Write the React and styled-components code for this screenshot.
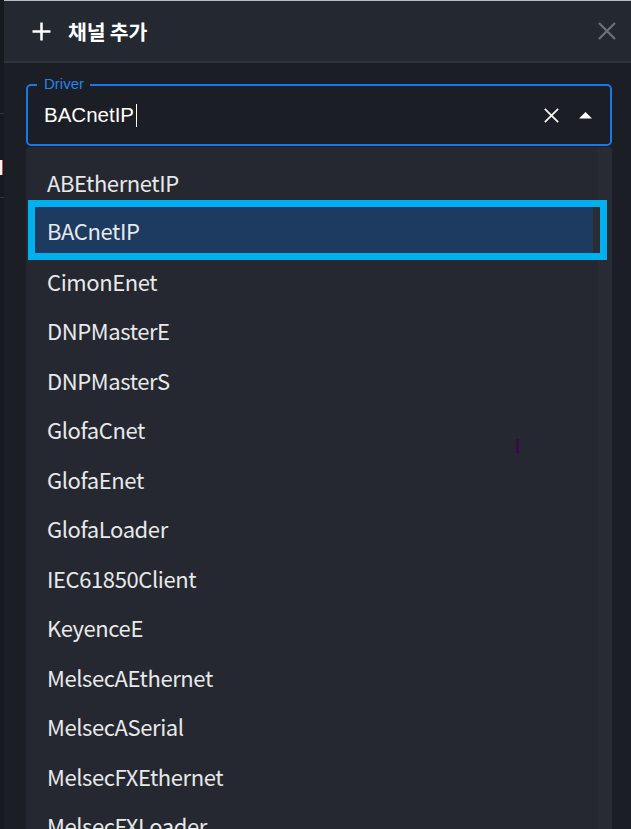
import React from 'react';
import styled, { createGlobalStyle } from 'styled-components';

const GlobalStyle = createGlobalStyle`
  html, body {
    margin: 0;
    padding: 0;
    background: #1b1e24;
    overflow: hidden;
  }
`;

const drivers = [
  'ABEthernetIP',
  'BACnetIP',
  'CimonEnet',
  'DNPMasterE',
  'DNPMasterS',
  'GlofaCnet',
  'GlofaEnet',
  'GlofaLoader',
  'IEC61850Client',
  'KeyenceE',
  'MelsecAEthernet',
  'MelsecASerial',
  'MelsecFXEthernet',
  'MelsecFXLoader',
  'MelsecQEthernet',
];

const Page = styled.div`
  display: flex;
  width: 631px;
  height: 829px;
  overflow: hidden;
`;

const LeftStrip = styled.div`
  width: 4px;
  flex-shrink: 0;
  background: #16191d;
  display: flex;
  flex-direction: column;
  padding-top: 113px;
  box-sizing: border-box;
`;

const StripLine = styled.div`
  height: 1px;
  background: #30353d;
  margin-bottom: ${p => p.$gap || 0}px;
`;

const StripGlyph = styled.div`
  width: 2px;
  height: 15px;
  background: #f2f2f2;
  border-right: 1px solid #d0463c;
  margin-bottom: 22px;
`;

const Dialog = styled.div`
  flex: 1;
  display: flex;
  flex-direction: column;
  border-top: 1px solid #b9bdc2;
  min-width: 0;
`;

const Header = styled.div`
  height: 60px;
  flex-shrink: 0;
  background: #232831;
  border-bottom: 2px solid #2e343c;
  display: flex;
  align-items: center;
  padding: 0 14px 0 27px;
  gap: 16px;
`;

const Title = styled.h2`
  margin: 0;
  flex: 1;
  font-family: "Noto Sans CJK KR", "Noto Sans", sans-serif;
  font-weight: 700;
  font-size: 20.5px;
  color: #ffffff;
  letter-spacing: -0.2px;
`;

const CloseButton = styled.button`
  border: none;
  background: none;
  padding: 0;
  width: 20px;
  height: 20px;
  display: flex;
  align-items: center;
  justify-content: center;
  cursor: pointer;
`;

const Body = styled.div`
  flex: 1;
  background: #1b1e24;
  padding: 21px 19px 0 22px;
  display: flex;
  flex-direction: column;
  min-height: 0;
`;

const FieldBox = styled.div`
  position: relative;
  height: 62px;
  box-sizing: border-box;
  border: 2px solid #1a78e6;
  border-radius: 5px;
  display: flex;
  align-items: center;
  padding: 0 18px 0 16px;
  flex-shrink: 0;
`;

const FieldLabel = styled.span`
  position: absolute;
  top: -11px;
  left: 9px;
  padding: 0 6px 0 7px;
  background: #1b1e24;
  font-family: "Liberation Sans", Arial, sans-serif;
  font-size: 15px;
  line-height: 18px;
  color: #2a82ea;
`;

const Value = styled.span`
  font-family: "Liberation Sans", Arial, sans-serif;
  font-size: 20.5px;
  color: #ffffff;
  display: flex;
  align-items: center;
  flex: 1;
`;

const Caret = styled.span`
  display: inline-block;
  width: 1px;
  height: 23px;
  background: #ffffff;
  margin-left: 2px;
`;

const Adornments = styled.div`
  display: flex;
  align-items: center;
  gap: 20px;
`;

const List = styled.div`
  position: relative;
  flex: 1;
  margin-top: 1px;
  padding-top: 10px;
  border-radius: 4px 4px 0 0;
  background: linear-gradient(to left, #282b33 14px, #252830 14px);
  overflow: hidden;
`;

const Item = styled.div`
  height: ${p => (p.$selected ? '46px' : '49.5px')};
  margin: ${p => (p.$selected ? '0 12px 3.5px 9px' : '0')};
  padding-left: ${p => (p.$selected ? '12px' : '21px')};
  display: flex;
  align-items: center;
  font-family: "Noto Sans CJK KR", "Noto Sans", sans-serif;
  font-size: 22px;
  letter-spacing: -0.4px;
  color: #e8e9ea;
  background: ${p =>
    p.$selected
      ? 'linear-gradient(to left, #2a2d33 7px, #1d3a60 7px)'
      : 'transparent'};
  box-shadow: ${p => (p.$selected ? '0 0 0 7px #00b0ef' : 'none')};
  position: relative;
`;

const StrayMark = styled.span`
  position: absolute;
  left: 490px;
  top: 292px;
  width: 3px;
  height: 14px;
  background: #380a46;
`;

const PlusIcon = () => (
  <svg width="21" height="21" viewBox="0 0 21 21">
    <path d="M10.5 1.5v18M1.5 10.5h18" stroke="#ffffff" strokeWidth="2.5" />
  </svg>
);

const CloseIcon = ({ size = 18, color = '#6b727c', width = 2.2 }) => (
  <svg width={size} height={size} viewBox="0 0 18 18">
    <path d="M1 1l16 16M17 1L1 17" stroke={color} strokeWidth={width} />
  </svg>
);

const ArrowUp = () => (
  <svg width="13" height="7" viewBox="0 0 13 7">
    <polygon points="0,6.5 6.5,0 13,6.5" fill="#ffffff" />
  </svg>
);

export default function App() {
  return (
    <>
      <GlobalStyle />
      <Page>
        <LeftStrip>
          <StripLine $gap={46} />
          <StripGlyph />
          <StripLine />
        </LeftStrip>
        <Dialog>
          <Header>
            <PlusIcon />
            <Title>채널 추가</Title>
            <CloseButton aria-label="close">
              <CloseIcon />
            </CloseButton>
          </Header>
          <Body>
            <FieldBox>
              <FieldLabel>Driver</FieldLabel>
              <Value>
                BACnetIP
                <Caret />
              </Value>
              <Adornments>
                <CloseIcon size={15} color="#f2f2f2" width={2.2} />
                <ArrowUp />
              </Adornments>
            </FieldBox>
            <List>
              {drivers.map(name => (
                <Item key={name} $selected={name === 'BACnetIP'}>
                  {name}
                </Item>
              ))}
              <StrayMark />
            </List>
          </Body>
        </Dialog>
      </Page>
    </>
  );
}
